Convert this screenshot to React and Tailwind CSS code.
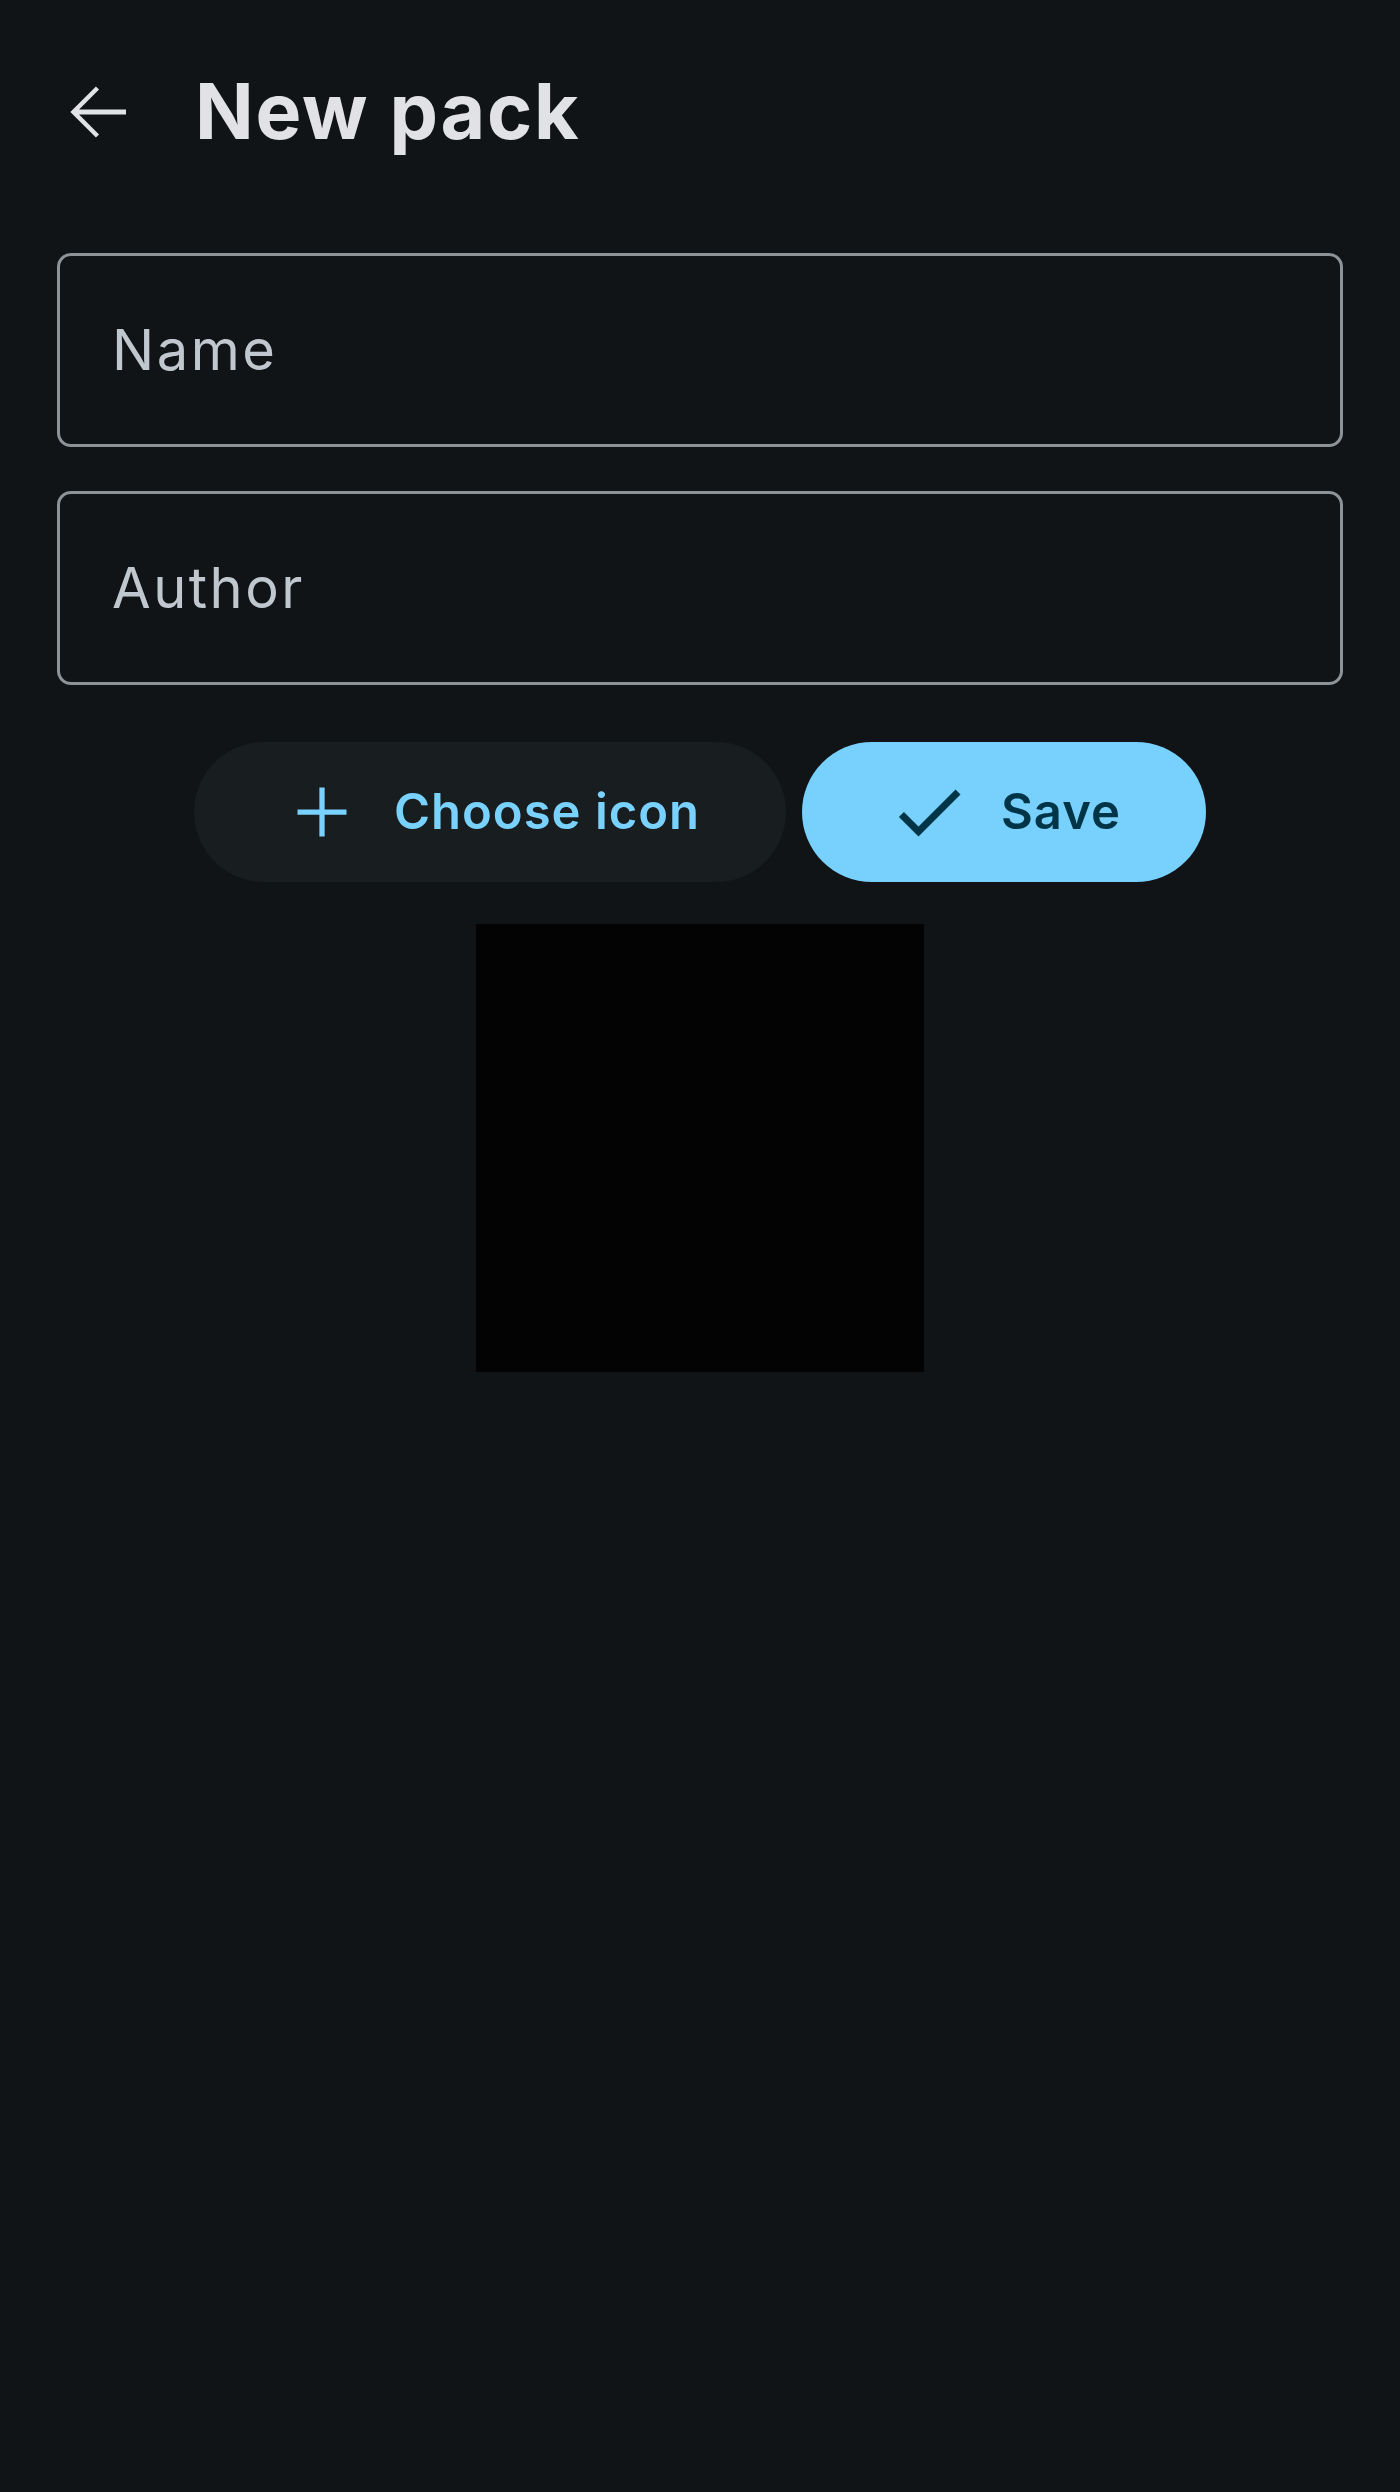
import { useState } from "react";

const font = { fontFamily: "Inter, 'Noto Sans', sans-serif" };

function Field({ label, value, onChange }) {
  return (
    <label className="flex h-[194px] items-center rounded-[14px] border-[3px] border-[#8e9398] pl-[52px] pr-[52px]">
      <input
        value={value}
        onChange={(e) => onChange(e.target.value)}
        placeholder={label}
        className="w-full bg-transparent text-[56px] tracking-[2.5px] text-[#e1e2e5] outline-none placeholder:text-[#c1c7ce]"
        style={font}
      />
    </label>
  );
}

export default function App() {
  const [name, setName] = useState("");
  const [author, setAuthor] = useState("");

  return (
    <div className="min-h-[2492px] w-full bg-[#111417]" style={font}>
      {/* Top bar */}
      <div className="flex h-[224px] items-center">
        <button className="ml-[56px] flex h-[84px] w-[84px] items-center justify-center text-[#e1e2e5]">
          <svg viewBox="0 0 24 24" className="h-[84px] w-[84px]" fill="currentColor">
            <path d="M20 11.3H6.6l5.7-5.7-.9-.9L4.1 12l7.3 7.3.9-.9-5.7-5.7H20z" />
          </svg>
        </button>
        <h1 className="ml-[55px] text-[77px] font-bold tracking-[1.8px] text-[#e1e2e5]">New pack</h1>
      </div>

      {/* Form */}
      <div className="mt-[29px] flex flex-col gap-[44px] px-[57px]">
        <Field label="Name" value={name} onChange={setName} />
        <Field label="Author" value={author} onChange={setAuthor} />
      </div>

      {/* Actions */}
      <div className="mt-[57px] flex justify-center gap-[16px]">
        <button className="flex h-[140px] w-[592px] items-center justify-center gap-[30px] rounded-full bg-[#181d20] text-[#79d1fd]">
          <svg viewBox="0 0 24 24" className="h-[84px] w-[84px]" fill="currentColor">
            <path d="M19 12.75h-6.25V19h-1.5v-6.25H5v-1.5h6.25V5h1.5v6.25H19z" />
          </svg>
          <span className="text-[49px] font-semibold tracking-[1px]">Choose icon</span>
        </button>
        <button className="flex h-[140px] w-[404px] items-center justify-center gap-[30px] rounded-full bg-[#78d0fd] text-[#003547]">
          <svg viewBox="0 0 24 24" className="h-[84px] w-[84px]" fill="currentColor">
            <path d="M9 16.17L4.83 12l-1.42 1.41L9 19 21 7l-1.41-1.41z" />
          </svg>
          <span className="text-[49px] font-semibold tracking-[1px]">Save</span>
        </button>
      </div>

      {/* Icon preview */}
      <div className="mt-[42px] flex justify-center">
        <div className="h-[448px] w-[448px] bg-[#030303]" />
      </div>
    </div>
  );
}
